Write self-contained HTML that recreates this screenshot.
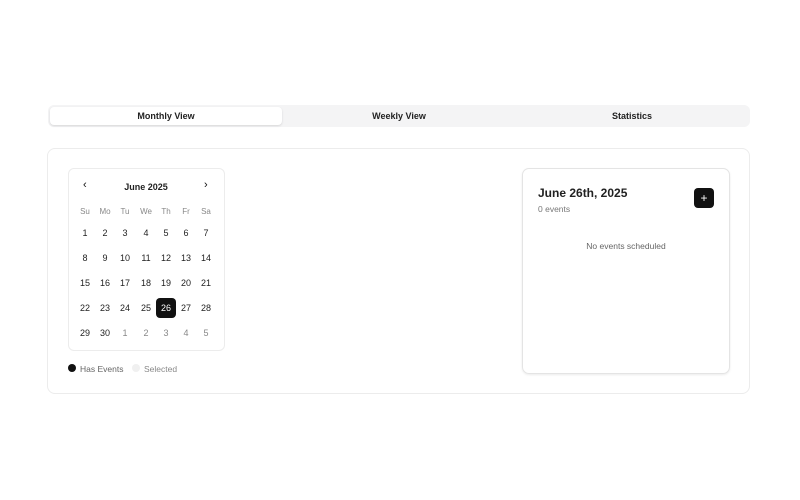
<!DOCTYPE html>
<html><head><style>
*{box-sizing:border-box;margin:0;padding:0}
body{width:800px;height:500px;background:#fff;font-family:"Liberation Sans",sans-serif;color:#111;position:relative;overflow:hidden}
.a{position:absolute}
.tabs{left:48px;top:105px;width:702px;height:22px;background:#f4f4f5;border-radius:6px}
.tab{position:absolute;top:2px;height:18px;width:232px;font-size:9px;font-weight:bold;text-align:center;line-height:19px;color:#222}
.tab.on{background:#fff;border-radius:4px;box-shadow:0 1px 2px rgba(0,0,0,.12)}
.card{left:47px;top:148px;width:703px;height:246px;border:1px solid #ececec;border-radius:8px}
.cal{left:68px;top:168px;width:157px;height:183px;border:1px solid #ececec;border-radius:6px}
.c{position:absolute;width:20px;height:20px;text-align:center;line-height:20px;font-size:9px;color:#222}
.w{color:#888;font-size:8px}
.g{color:#888}
.sel{background:#111;color:#fff;border-radius:4px}
.right{left:522px;top:168px;width:208px;height:206px;border:1px solid #e4e4e4;border-radius:7px;box-shadow:0 1px 2px rgba(0,0,0,.08)}
</style></head><body>
<div class="a tabs">
<div class="tab on" style="left:2px">Monthly View</div>
<div class="tab" style="left:235px">Weekly View</div>
<div class="tab" style="left:468px">Statistics</div>
</div>
<div class="a card"></div>
<div class="a cal"></div>
<div class="a" style="left:83px;top:179px;font-size:11px">‹</div>
<div class="a" style="left:204px;top:179px;font-size:11px">›</div>
<div class="a" style="left:100px;top:182px;width:92px;text-align:center;font-size:9px;font-weight:bold;color:#222">June 2025</div>
<div id="g"></div>
<div class="a" style="left:68px;top:364px;width:8px;height:8px;border-radius:50%;background:#111"></div>
<div class="a" style="left:80px;top:364px;font-size:8.5px;color:#666">Has Events</div>
<div class="a" style="left:132px;top:364px;width:8px;height:8px;border-radius:50%;background:#f0f0f0"></div>
<div class="a" style="left:144px;top:364px;font-size:8.5px;color:#888">Selected</div>
<div class="a right"></div>
<div class="a" style="left:538px;top:186px;font-size:12px;font-weight:bold;color:#222">June 26th, 2025</div>
<div class="a" style="left:538px;top:204px;font-size:8.5px;color:#777">0 events</div>
<div class="a" style="left:694px;top:188px;width:20px;height:20px;background:#111;border-radius:4px;color:#fff;text-align:center;line-height:20px;font-size:12px">+</div>
<div class="a" style="left:522px;top:241px;width:208px;text-align:center;font-size:8.5px;color:#666">No events scheduled</div>
<script>
var h='',xs=[75,95,115,136,156,176,196],wd=['Su','Mo','Tu','We','Th','Fr','Sa'];
wd.forEach(function(d,i){h+='<div class="c w" style="left:'+xs[i]+'px;top:202px">'+d+'</div>'});
var d=1;
for(var r=0;r<5;r++)for(var i=0;i<7;i++){var n=d,cl='c';if(d>30){n=d-30;cl+=' g'}if(d==26)cl+=' sel';
h+='<div class="'+cl+'" style="left:'+xs[i]+'px;top:'+(223+r*25)+'px">'+n+'</div>';d++}
document.getElementById('g').innerHTML=h;
</script>
</body></html>
